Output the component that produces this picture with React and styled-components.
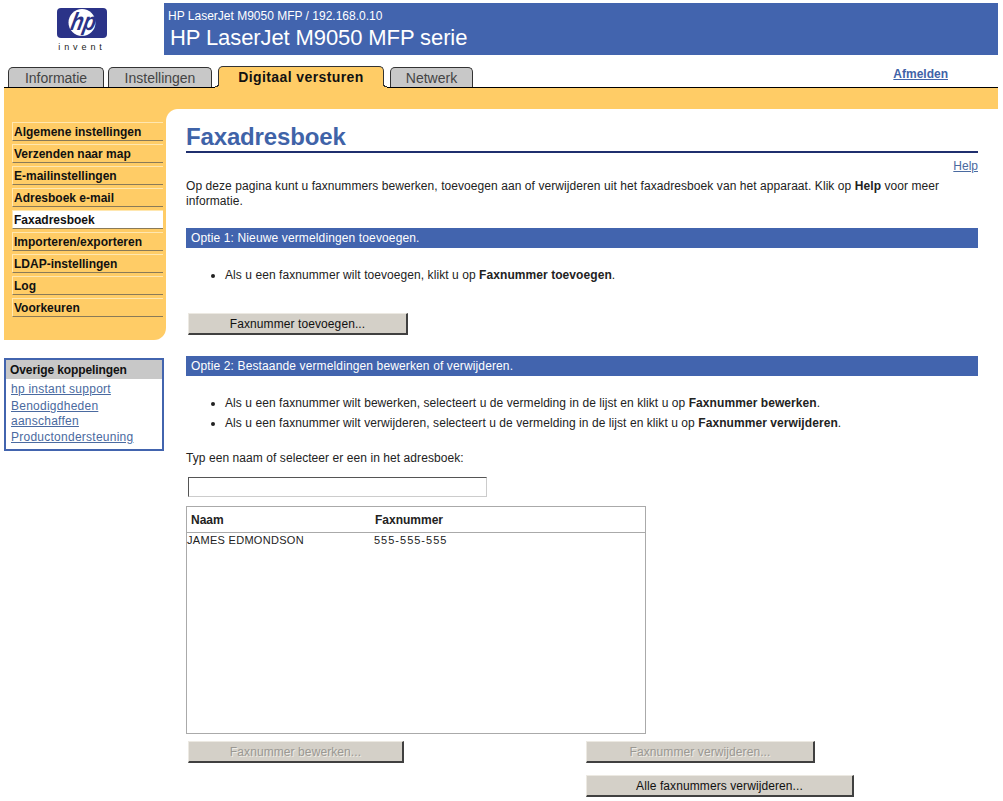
import React from 'react';
import styled, { createGlobalStyle, css } from 'styled-components';

const Global = createGlobalStyle`
  html, body { margin: 0; padding: 0; background: #fff; overflow: hidden; }
  body { font-family: "Liberation Sans", Arial, sans-serif; font-size: 12px; color: #222; letter-spacing: 0.07px; }
`;

const Page = styled.div`
  width: 998px;
  height: 801px;
  padding-top: 3px;
  box-sizing: border-box;
`;

const Header = styled.header`
  display: flex;
  height: 52px;
`;

const LogoCell = styled.div`
  width: 164px;
  flex: none;
`;

const Banner = styled.div`
  flex: 1;
  background: #4264ae;
  color: #fff;
  padding: 6px 0 0 4px;
`;

const BannerSmall = styled.div`
  font-size: 12px;
  line-height: 14px;
  letter-spacing: 0;
`;

const BannerTitle = styled.div`
  font-size: 22px;
  line-height: 24px;
  margin: 3px 0 0 2px;
  letter-spacing: -0.1px;
`;

const TabRow = styled.nav`
  display: flex;
  align-items: flex-end;
  height: 32px;
  margin-left: 4px;
  padding-left: 4px;
  border-bottom: 1px solid #000;
  position: relative;
`;

const Tab = styled.a`
  box-sizing: border-box;
  width: ${p => p.$w}px;
  margin-right: ${p => p.$gap}px;
  height: 20px;
  border: 1px solid #333;
  border-bottom: none;
  border-radius: 5px 5px 0 0;
  text-align: center;
  font-size: 14px;
  line-height: 20px;
  letter-spacing: 0;
  color: #444;
  background: #c8c8c8;
  ${p => p.$active && css`
    background: #ffcc66;
    color: #111;
    font-weight: bold;
    letter-spacing: 0.4px;
    margin-bottom: -1px;
    height: 22px;
    position: relative;
    &::before, &::after {
      content: "";
      position: absolute;
      bottom: 0;
      width: 4px;
      height: 5px;
    }
    &::before {
      left: -4px;
      background: radial-gradient(circle at 0 0, #fff 3.5px, #333 3.5px, #333 4.5px, #ffcc66 4.5px);
    }
    &::after {
      right: -4px;
      background: radial-gradient(circle at 100% 0, #fff 3.5px, #333 3.5px, #333 4.5px, #ffcc66 4.5px);
    }
  `}
`;

const Logout = styled.a`
  margin: 0 50px 6px auto;
  font-weight: bold;
  letter-spacing: 0;
  color: #3f63a8;
  text-decoration: underline;
`;

const Band = styled.div`
  height: 21px;
  margin-left: 4px;
  background: #ffcc66;
`;

const Columns = styled.div`
  display: flex;
  margin-left: 4px;
`;

const Side = styled.aside`
  width: 162px;
  flex: none;
`;

const SideMenu = styled.ul`
  list-style: none;
  margin: 0;
  padding: 13px 3px 24px 8px;
  height: 231px;
  box-sizing: border-box;
  background: #ffcc66;
  border-radius: 0 0 12px 0;
`;

const SideItem = styled.li`
  box-sizing: border-box;
  height: 19px;
  margin-bottom: 3px;
  padding-left: 1px;
  border-top: 1px solid #ffe7b0;
  border-left: 1px solid #ffe7b0;
  border-bottom: 1px solid #8a7a58;
  font-weight: bold;
  line-height: 18px;
  letter-spacing: 0;
  color: #111;
  background: ${p => (p.$active ? '#fff' : 'transparent')};
`;

const LinkBox = styled.div`
  margin-top: 18px;
  width: 160px;
  box-sizing: border-box;
  border: 2px solid #4264ae;
`;

const LinkHead = styled.div`
  background: #c8c8c8;
  font-weight: bold;
  height: 19px;
  line-height: 20px;
  padding-left: 4px;
  letter-spacing: -0.1px;
  color: #111;
`;

const LinkList = styled.div`
  padding: 3px 5px 0;
  height: 70px;
  box-sizing: border-box;
  line-height: 15px;
  letter-spacing: 0.25px;
`;

const BoxLink = styled.a`
  display: block;
  color: #4a6aa0;
  text-decoration: underline;
  margin-bottom: ${p => p.$gap || 2}px;
`;

const Content = styled.main`
  flex: 1;
  padding: 13px 20px 0 20px;
  background: radial-gradient(circle at 12px 12px, #fff 11.5px, #ffcc66 12.5px) top left / 12px 12px no-repeat;
`;

const Title = styled.h1`
  margin: 0;
  font-size: 24px;
  line-height: 29px;
  letter-spacing: -0.15px;
  color: #3f63a8;
  border-bottom: 2px solid #1f2f6e;
`;

const HelpRow = styled.div`
  text-align: right;
  margin-top: 6px;
  line-height: 15px;
  letter-spacing: 0;
`;

const TextLink = styled.a`
  color: #4a6aa0;
  text-decoration: underline;
`;

const Intro = styled.p`
  margin: 5px 0 0;
  line-height: 15px;
`;

const SectionBar = styled.div`
  height: 20px;
  line-height: 21px;
  padding-left: 5px;
  margin-top: ${p => p.$top}px;
  background: #4264ae;
  color: #fff;
  letter-spacing: 0.13px;
`;

const Bullets = styled.ul`
  margin: 20px 0 ${p => p.$after}px;
  padding: 0 0 0 39px;
  line-height: 15px;
  li + li { margin-top: 5px; }
`;

const Button = styled.button`
  display: block;
  box-sizing: border-box;
  width: ${p => p.$w}px;
  height: 22px;
  padding: 0;
  margin-left: 2px;
  background: #d4d0c8;
  border-style: solid;
  border-color: #ece9e2 #404040 #404040 #ece9e2;
  border-width: 1px 2px 2px 1px;
  font: 12px "Liberation Sans", Arial, sans-serif;
  letter-spacing: 0.09px;
  color: ${p => (p.disabled ? '#9a9893' : '#111')};
  ${p => p.disabled && css`text-shadow: 1px 1px 0 #efece6;`}
`;

const Prompt = styled.div`
  margin-top: 20px;
  line-height: 15px;
`;

const NameInput = styled.input`
  display: block;
  box-sizing: border-box;
  width: 299px;
  height: 20px;
  margin: 11px 0 0 2px;
  border: 1px solid;
  border-color: #555 #ccc #ccc #555;
  background: #fff;
`;

const ListPanel = styled.div`
  box-sizing: border-box;
  width: 460px;
  height: 228px;
  margin-top: 9px;
  border: 1px solid #aaa;
`;

const ListHead = styled.div`
  display: grid;
  grid-template-columns: 184px 1fr;
  height: 25px;
  line-height: 26px;
  padding-left: 4px;
  border-bottom: 1px solid #aaa;
  font-weight: bold;
  letter-spacing: 0;
`;

const ListRow = styled.div`
  display: grid;
  grid-template-columns: 187px 1fr;
  font-size: 11px;
  line-height: 15px;
`;

const ListName = styled.span`
  letter-spacing: 0.3px;
`;

const ListNumber = styled.span`
  letter-spacing: 1px;
`;

const Actions = styled.div`
  display: grid;
  grid-template-columns: 398px auto;
  row-gap: 12px;
  margin-top: 7px;
`;

const HpLogo = () => (
  <svg width="164" height="52" viewBox="0 0 164 52" role="img" aria-label="hp invent">
    <rect x="57" y="5" width="50" height="30" rx="4" fill="#2b3388" />
    <circle cx="82" cy="19.5" r="13.5" fill="#fff" />
    <text
      transform="translate(82 27) skewX(-12) scale(0.82 1)"
      textAnchor="middle"
      fontFamily="Liberation Sans"
      fontStyle="italic"
      fontWeight="bold"
      fontSize="25"
      fill="#2b3388"
    >hp</text>
    <text x="82" y="47" textAnchor="middle" fontFamily="Liberation Sans" fontSize="9" letterSpacing="3.9" fill="#222">invent</text>
  </svg>
);

const menu = ['Algemene instellingen', 'Verzenden naar map', 'E-mailinstellingen', 'Adresboek e-mail', 'Faxadresboek', 'Importeren/exporteren', 'LDAP-instellingen', 'Log', 'Voorkeuren'];

export default function App() {
  return (
    <Page>
      <Global />
      <Header>
        <LogoCell><HpLogo /></LogoCell>
        <Banner>
          <BannerSmall>HP LaserJet M9050 MFP / 192.168.0.10</BannerSmall>
          <BannerTitle>HP LaserJet M9050 MFP serie</BannerTitle>
        </Banner>
      </Header>
      <TabRow>
        <Tab $w={96} $gap={4}>Informatie</Tab>
        <Tab $w={104} $gap={6}>Instellingen</Tab>
        <Tab $w={166} $gap={6} $active>Digitaal versturen</Tab>
        <Tab $w={83} $gap={0}>Netwerk</Tab>
        <Logout>Afmelden</Logout>
      </TabRow>
      <Band />
      <Columns>
        <Side>
          <SideMenu>
            {menu.map(m => <SideItem key={m} $active={m === 'Faxadresboek'}>{m}</SideItem>)}
          </SideMenu>
          <LinkBox>
            <LinkHead>Overige koppelingen</LinkHead>
            <LinkList>
              <BoxLink>hp instant support</BoxLink>
              <BoxLink $gap={1}>Benodigdheden aanschaffen</BoxLink>
              <BoxLink>Productondersteuning</BoxLink>
            </LinkList>
          </LinkBox>
        </Side>
        <Content>
          <Title>Faxadresboek</Title>
          <HelpRow><TextLink>Help</TextLink></HelpRow>
          <Intro>Op deze pagina kunt u faxnummers bewerken, toevoegen aan of verwijderen uit het faxadresboek van het apparaat. Klik op <b>Help</b> voor meer informatie.</Intro>
          <SectionBar $top={19}>Optie 1: Nieuwe vermeldingen toevoegen.</SectionBar>
          <Bullets $after={30}>
            <li>Als u een faxnummer wilt toevoegen, klikt u op <b>Faxnummer toevoegen</b>.</li>
          </Bullets>
          <Button $w={220}>Faxnummer toevoegen...</Button>
          <SectionBar $top={21}>Optie 2: Bestaande vermeldingen bewerken of verwijderen.</SectionBar>
          <Bullets $after={0}>
            <li>Als u een faxnummer wilt bewerken, selecteert u de vermelding in de lijst en klikt u op <b>Faxnummer bewerken</b>.</li>
            <li>Als u een faxnummer wilt verwijderen, selecteert u de vermelding in de lijst en klikt u op <b>Faxnummer verwijderen</b>.</li>
          </Bullets>
          <Prompt>Typ een naam of selecteer er een in het adresboek:</Prompt>
          <NameInput />
          <ListPanel>
            <ListHead><span>Naam</span><span>Faxnummer</span></ListHead>
            <ListRow><ListName>JAMES EDMONDSON</ListName><ListNumber>555-555-555</ListNumber></ListRow>
          </ListPanel>
          <Actions>
            <Button $w={216} disabled>Faxnummer bewerken...</Button>
            <Button $w={229} disabled>Faxnummer verwijderen...</Button>
            <span />
            <Button $w={268}>Alle faxnummers verwijderen...</Button>
          </Actions>
        </Content>
      </Columns>
    </Page>
  );
}
